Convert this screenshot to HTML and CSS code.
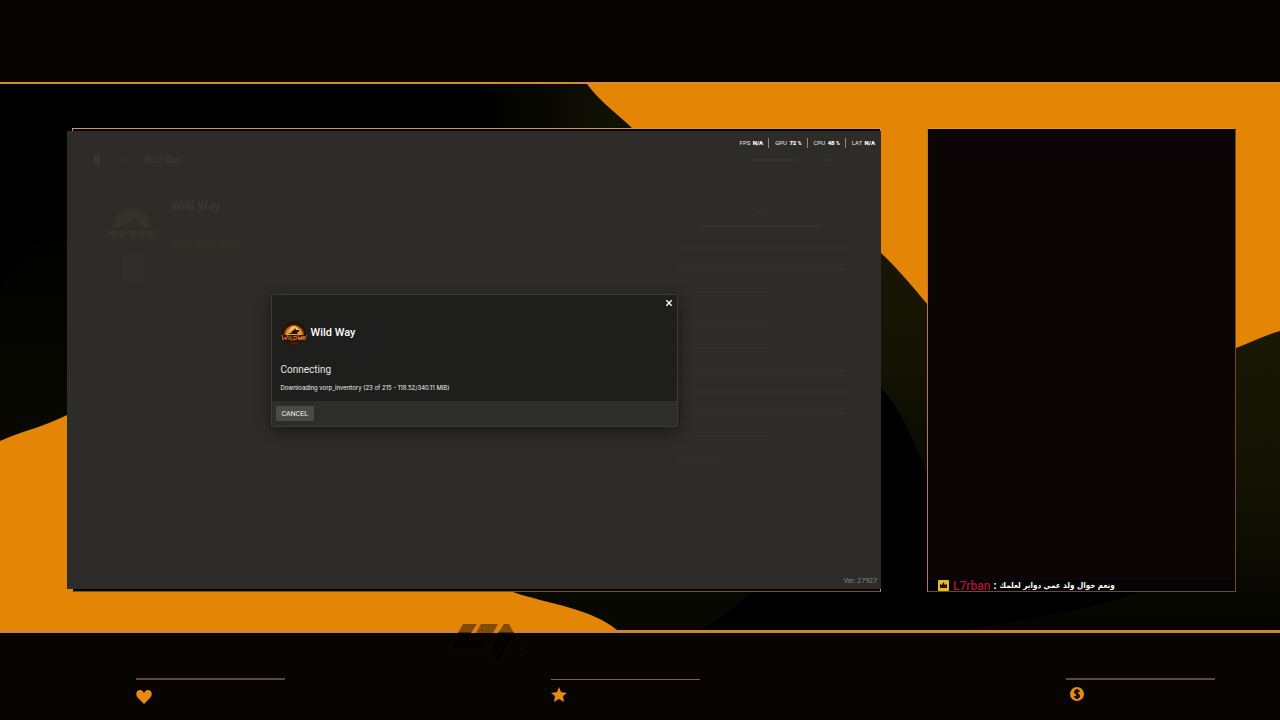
FILE: index.html
```html
<!DOCTYPE html>
<html lang="en">
<head>
  <meta charset="UTF-8" />
  <meta name="viewport" content="width=device-width, initial-scale=1.0" />
  <title>Wild Way - Stream</title>
  <link rel="stylesheet" href="styles.css">
</head>
<body>
  <header class="top-bar"></header>

  <main class="scene">
    <svg class="waves" viewBox="0 0 1280 546" preserveAspectRatio="none" aria-hidden="true">
      <defs>
        <linearGradient id="glow-top" x1="0" x2="1">
          <stop offset="0" stop-color="#000000" />
          <stop offset="1" stop-color="#141404" />
        </linearGradient>
        <linearGradient id="glow-left" x1="0" y1="0" x2="0" y2="1">
          <stop offset="0" stop-color="#000000" />
          <stop offset="1" stop-color="#0a0a02" />
        </linearGradient>
        <linearGradient id="glow-right" x1="0" y1="0" x2="0" y2="1">
          <stop offset="0" stop-color="#1a1905" />
          <stop offset="0.5" stop-color="#141304" />
          <stop offset="1" stop-color="#040501" />
        </linearGradient>
      </defs>
      <rect width="1280" height="546" fill="#000000" />
      <rect x="480" width="160" height="60" fill="url(#glow-top)" />
      <path d="M0 200C30 160 50 145 80 130V380H0Z" fill="url(#glow-left)" />
      <path d="M860 130H940V430C915 350 890 300 860 290Z" fill="url(#glow-right)" />
      <path d="M1220 230H1280V546H960C1080 530 1220 500 1220 440Z" fill="url(#glow-right)" />
      <path d="M500 500H760C740 520 720 535 700 546H600Z" fill="#070801" />
      <path d="M587 0C600 18 618 30 633 45C720 100 810 100 881 169C898 185 914 204 928 221C1000 320 1130 310 1236 264C1250 259 1265 251 1280 247V0Z" fill="#e58506" />
      <path d="M0 357C22 347 46 342 67 331C200 280 330 440 513 508C548 520 590 524 617 546H0Z" fill="#e58506" />
    </svg>

    <section class="stage">
      <div class="game">
        <div class="page" aria-hidden="true">
          <div class="page-nav">
            <svg class="page-mark" viewBox="0 0 8 10"><path d="M2 0H4V4H5V0H7V10H5V6H4V10H3Z" /></svg>
            <span class="bar bar-dash"></span>
            <span>Wild Way</span>
            <span class="bar bar-nav"></span>
            <span class="bar bar-dot"></span>
          </div>
          <div class="page-body">
            <div class="page-side">
              <svg class="page-logo" viewBox="0 0 48 40">
                <path d="M5 25A19 19 0 0 1 43 25H37L31 21L27 16L23 19L14 22L11 25Z" />
                <path d="M0 28H48V31H44V36H40V32H36V36H32V32H27V36H22V32H17V36H12V32H8V36H4V32H0Z" />
              </svg>
              <span class="bar bar-box"></span>
            </div>
            <div class="page-main">
              <span>Wild Way</span>
              <div class="tags"><i class="bar"></i><i class="bar"></i><i class="bar"></i></div>
            </div>
            <div class="page-info">
              <i class="bar info-dot"></i>
              <i class="bar info-title"></i>
              <i class="bar info-wide"></i>
              <i class="bar info-wide"></i>
              <i class="bar info-short"></i>
              <i class="bar info-short info-gap"></i>
              <i class="bar info-short"></i>
              <i class="bar info-wide"></i>
              <i class="bar info-wide"></i>
              <i class="bar info-wide"></i>
              <i class="bar info-short"></i>
              <i class="bar info-last"></i>
            </div>
          </div>
        </div>

        <div class="hud">
          <span>FPS <b>N/A</b></span>
          <span>GPU <b>72 <small>%</small></b></span>
          <span>CPU <b>48 <small>%</small></b></span>
          <span>LAT <b>N/A</b></span>
        </div>

        <div class="overlay">
          <div class="dialog" role="dialog" aria-labelledby="server-name">
            <button class="close-btn" aria-label="Close">
              <svg viewBox="0 0 6 6"><path d="M1 1L5 5M5 1L1 5" /></svg>
            </button>
            <div class="dialog-body">
              <div class="server">
                <svg class="server-logo" viewBox="0 0 26 26" aria-hidden="true">
                  <circle cx="13" cy="13" r="12" fill="#2a1206" />
                  <path d="M3 15A10 10 0 0 1 23 15Z" fill="#a85c14" />
                  <path d="M5 15A8 8 0 0 1 21 15Z" fill="#e89c38" />
                  <circle cx="13" cy="10" r="4" fill="#f6bd5c" />
                  <path d="M7 14L10 13L11 11L13 10L14 8L15 10L18 10L18 12L16 12L17 14Z" fill="#2a1206" />
                  <path d="M0 15H26V20H0Z" fill="#2a1206" />
                  <path d="M1 15L2 20L4 17L5 20L7 15M8 16V20M10 16V20H12M13 16V20L16 19V17L13 16M17 15L18 20L19 17L20 20L21 16M21 20L22 16L23 20M23 16L24 18L26 15M24 18V20" fill="none" stroke="#c87424" stroke-width="1" />
                  <path d="M7 22H19L16 24H10Z" fill="#4a1c08" />
                </svg>
                <h1 id="server-name">Wild Way</h1>
              </div>
              <h2>Connecting</h2>
              <p>Downloading vorp_inventory (23 of 215 - 118.52/340.11 MiB)</p>
            </div>
            <div class="dialog-footer">
              <button class="cancel-btn">CANCEL</button>
            </div>
          </div>
        </div>

        <span class="version">Ver. 27927</span>
      </div>
    </section>

    <aside class="chat">
      <div class="message">
        <svg class="badge" viewBox="0 0 11 11" aria-hidden="true">
          <rect width="11" height="11" rx="1" fill="#e9b925" />
          <path d="M2 8V4L4 5L5.500 2L7 5L9 4V8Z" fill="#1a1204" />
        </svg>
        <span class="user">L7rban</span>
        <span class="colon">:</span>
        <span class="text" lang="ar" dir="rtl">ونعم خوال ولد عمي دواير لعلمك</span>
      </div>
    </aside>
  </main>

  <footer class="bottom-bar">
    <svg class="watermark" viewBox="0 0 76 44" aria-hidden="true">
      <g class="mark-upper">
        <path d="M15 2H29L23 11H10Z" />
        <path d="M33 2H50L45 11H28Z" />
        <path d="M56 2H61L66 11H50Z" />
      </g>
      <g class="mark-lower">
        <path d="M10 11H23L20 17H39L33 27H2Z" />
        <path d="M50 11H66L75 28L62 20L50 41L42 27Z" />
      </g>
    </svg>
    <div class="stat">
      <svg viewBox="0 0 16 16" aria-hidden="true"><path d="M8 15L2 9C-1 6 0 1 4 1C6 1 7 2 8 4C9 2 10 1 12 1C16 1 17 6 14 9Z" /></svg>
    </div>
    <div class="stat stat-thin">
      <svg viewBox="0 0 16 16" aria-hidden="true"><path d="M8 0L10 5L16 6L12 9L13 15L8 12L3 15L4 9L0 6L6 5Z" /></svg>
    </div>
    <div class="stat stat-coin">
      <svg viewBox="0 0 16 16" aria-hidden="true">
        <circle cx="8" cy="8" r="7" />
        <path class="dollar" d="M10 6C10 4 6 4 6 6C6 8 10 8 10 10C10 12 6 12 6 10M8 3V13" />
      </svg>
    </div>
  </footer>
</body>
</html>
```
FILE: styles.css
```css
* { box-sizing: border-box; margin: 0; padding: 0; }
body {
  font-family: Roboto, "Liberation Sans", sans-serif;
  background: #080401;
  color: #fff;
  min-height: 100vh;
  display: flex;
  flex-direction: column;
}
button {
  font-family: inherit;
  border: none;
  cursor: pointer;
}

.top-bar {
  height: 84px;
  border-bottom: 2px solid #d98a2b;
}

/* main area */
.scene {
  flex: 1;
  display: grid;
  grid-template-columns: 814fr 309fr;
  gap: 46px;
  padding: 44px 44px 38px 67px;
  position: relative;
}
.waves {
  position: absolute;
  inset: 0;
  width: 100%;
  height: 100%;
}
.stage {
  position: relative;
  display: flex;
  padding: 3px 0;
}
.stage::before {
  content: '';
  position: absolute;
  inset: 0 0 0 5px;
  background: #0d0403;
  border: 1px solid #c9996c;
  border-bottom-color: #6d5a20;
}
.game {
  flex: 1;
  position: relative;
  background: #2d2c28;
}

/* faded page behind the dialog */
.page {
  padding: 23px 36px 0 25px;
  color: #383733;
  font-size: 9px;
  font-weight: 700;
}
.page-nav {
  display: flex;
  align-items: center;
  height: 12px;
}
.page-mark { width: 8px; height: 10px; fill: #3b3a36; }
.bar {
  display: block;
  height: 2px;
  background: #31302c;
}
.bar-dash { width: 6px; margin: 0 18px 0 20px; }
.bar-nav { width: 48px; margin: 0 26px 0 auto; }
.bar-dot { width: 8px; height: 4px; margin-right: 14px; }
.page-body {
  display: flex;
  padding: 33px 0 0 16px;
}
.page-side { width: 63px; }
.page-logo {
  display: block;
  width: 48px;
  height: 40px;
  margin-top: 4px;
  fill: #32322b;
}
.bar-box { width: 22px; height: 26px; margin: 12px 0 0 14px; background: #2f2e2a; }
.page-main { font-size: 12px; }
.tags { display: flex; gap: 4px; margin-top: 26px; }
.tags .bar { width: 20px; height: 8px; background: #302c28; }
.page-info {
  width: 168px;
  margin-left: auto;
  display: flex;
  flex-direction: column;
  gap: 20px;
  padding-top: 12px;
}
.page-info .bar { background: #302f2b; }
.page-info .info-dot { width: 8px; height: 4px; align-self: center; margin-bottom: -10px; }
.page-info .info-title { width: 122px; align-self: center; background: #343330; }
.info-short { width: 92px; }
.info-last { width: 44px; }
.info-gap { margin-top: 12px; }

.hud {
  position: absolute;
  top: 7px;
  right: 6px;
  display: flex;
  font-size: 6px;
  line-height: 10px;
  color: #e8e8e4;
}
.hud span + span {
  border-left: 1px solid #8a8984;
  margin-left: 5px;
  padding-left: 6px;
}
.hud b { color: #fff; margin-left: 1px; font-weight: 900; }

/* connecting dialog */
.overlay {
  position: absolute;
  inset: 0;
  display: flex;
  align-items: center;
  justify-content: center;
}
.dialog {
  position: relative;
  width: 50%;
  background: #1e1e1c;
  border: 1px solid #3b3b38;
  border-radius: 2px;
  box-shadow: 0 4px 16px rgba(0,0,0,0.45);
}
.close-btn {
  position: absolute;
  top: 2px;
  right: 2px;
  width: 12px;
  height: 12px;
  padding: 2px;
  background: none;
}
.close-btn svg {
  display: block;
  width: 8px;
  height: 8px;
  stroke: #fff;
  stroke-width: 1;
}
.dialog-body { padding: 25px 9px 8px; }
.server {
  display: flex;
  align-items: center;
  gap: 4px;
  margin-bottom: 17px;
}
.server-logo { width: 26px; height: 26px; }
.dialog h1 {
  font-size: 11px;
  line-height: 14px;
  font-weight: 500;
}
.dialog h2 {
  font-size: 10px;
  line-height: 14px;
  font-weight: 400;
  color: #e6e6e2;
}
.dialog p {
  margin-top: 6px;
  font-family: Inter, sans-serif;
  font-size: 6px;
  line-height: 10px;
  color: #f0f0ec;
}
.dialog-footer {
  padding: 5px 4px;
  background: #2d2d2a;
}
.cancel-btn {
  display: block;
  height: 15px;
  padding: 1px 6px 0;
  font-size: 7px;
  font-weight: 400;
  color: #f0f0ec;
  background: #4a4a47;
  border-radius: 1px;
}
.version {
  position: absolute;
  right: 4px;
  bottom: 3px;
  font-size: 7px;
  line-height: 10px;
  color: #85847f;
}

/* chat */
.chat {
  position: relative;
  display: flex;
  flex-direction: column;
  justify-content: flex-end;
  background: #0b0605;
  border: 1px solid #6b4d18;
  border-left-color: #b37a4d;
  border-top-color: #d99a3c;
}
.message {
  display: flex;
  align-items: center;
  height: 11px;
  padding-left: 10px;
  background: #050303;
  white-space: nowrap;
}
.badge { width: 11px; height: 11px; margin-right: 4px; }
.user {
  font-size: 12px;
  line-height: 14px;
  font-weight: 500;
  color: #b0123f;
}
.colon {
  margin: 0 3px;
  font-size: 11px;
  font-weight: 700;
}
.text {
  font-family: "DejaVu Sans Condensed", "DejaVu Sans", sans-serif;
  font-size: 8px;
  line-height: 14px;
  font-weight: 700;
}

/* footer */
.bottom-bar {
  position: relative;
  height: 90px;
  border-top: 3px solid #cc8436;
  display: grid;
  grid-template-columns: 415fr 515fr 150fr;
  padding: 45px 64px 0 136px;
}
.watermark {
  position: absolute;
  top: -11px;
  left: 35%;
  width: 76px;
  height: 44px;
}
.mark-upper { fill: #804a07; }
.mark-lower { fill: #030201; stroke: #120b06; }
.stat {
  width: 149px;
  border-top: 2px solid #5f4744;
  padding-top: 9px;
}
.stat svg {
  display: block;
  width: 16px;
  height: 16px;
  fill: #e58a14;
}
.stat-thin { border-top: 1px solid #8c5a55; margin-top: 1px; padding-top: 7px; }
.stat-coin { padding: 6px 0 0 3px; }
.stat .dollar {
  fill: none;
  stroke: #1a0d02;
  stroke-width: 2;
}
```
